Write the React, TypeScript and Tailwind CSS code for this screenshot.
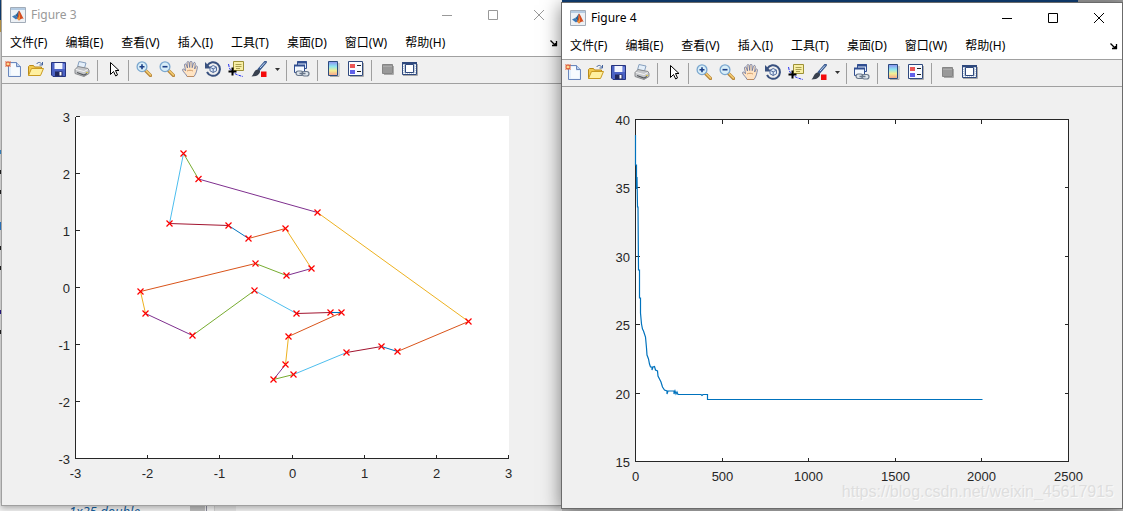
import { ReactNode } from 'react';

const BLUE = '#0072bd';
const ORANGE = '#d95319';
const YELLOW = '#edb120';
const PURPLE = '#7e2f8e';
const GREEN = '#77ac30';
const CYAN = '#4dbeee';
const MAROON = '#a2142f';

// tour stops in plot pixels, each with the colour of the leg that leaves it
const tour: [number, number, string][] = [
  [181.5, 69.5, GREEN],
  [196.5, 95, PURPLE],
  [315.5, 128.5, YELLOW],
  [466.5, 237.5, ORANGE],
  [395.5, 267.5, BLUE],
  [379.5, 262.5, MAROON],
  [344.5, 268.5, CYAN],
  [291.5, 290.5, GREEN],
  [271.5, 295.5, PURPLE],
  [283.5, 280.5, YELLOW],
  [286.5, 252.5, ORANGE],
  [339.5, 228.5, BLUE],
  [328.5, 228.5, MAROON],
  [294.5, 229.5, CYAN],
  [252.5, 206.5, GREEN],
  [190.5, 251.5, PURPLE],
  [143.5, 229.5, YELLOW],
  [138.5, 207.5, ORANGE],
  [253.5, 179.5, GREEN],
  [284.5, 191.5, PURPLE],
  [309.5, 184.5, YELLOW],
  [283.5, 144.5, ORANGE],
  [246.5, 154.5, BLUE],
  [226.5, 141.5, MAROON],
  [167.5, 139.5, CYAN],
];

const costCurve =
  '73.5,48 73.5,78 74.5,78 74.5,102 75,90 75.5,120 76,120 76.5,183 77.5,183 77.5,211 78.5,211 78.5,226 79.5,237 80.5,242 81.5,244 83.5,250 84.5,261 85,268 86.5,272 87.5,277 88.5,280 90,280 90,283 91,280 92.5,279.5 93.5,283 95.5,284 96,289 97.5,292 99,295 100.5,300 102.5,303 105,304 105,307 106,304 112,304 112,307 113,304 114,307 115,305 116,307.5 139,307.5 140,308.5 141,307.5 145.5,307.5 145.5,312.5 420.5,312.5';

const menus = ['文件(F)', '编辑(E)', '查看(V)', '插入(I)', '工具(T)', '桌面(D)', '窗口(W)', '帮助(H)'];

function Icon({ children }: { children: ReactNode }) {
  return <svg className="block h-4 w-4" viewBox="0 0 16 16" fill="none" aria-hidden="true">{children}</svg>;
}

function Magnifier({ plus }: { plus?: boolean }) {
  return (
    <Icon>
      <path d="M9.5 9.5l5 5" stroke="#b8863a" strokeWidth="3.2" strokeLinecap="round" />
      <path d="M10 9.5l4.5 4.5" stroke="#f6cf72" strokeWidth="1.5" strokeLinecap="round" />
      <circle cx="6" cy="5.7" r="4.9" fill="#d8eef8" stroke="#7ba7cf" strokeWidth="1.3" />
      <path d={plus ? 'M3.5 5.7h5M6 3.2v5' : 'M3.5 5.7h5'} stroke="#1c3f87" strokeWidth="1.6" />
    </Icon>
  );
}

const icons: Record<string, ReactNode> = {
  'New figure': (
    <Icon>
      <path d="M3.500 1.500h8l4 4v10h-12z" fill="#e4f0fc" stroke="#6a87bd" />
      <path d="M6 3h5v4h3.5v7.5H6z" fill="#fff" opacity=".7" />
      <path d="M11.5 1.5v4h4" fill="#b9cfec" stroke="#6a87bd" />
      <path d="M.5.5l5 5M5.5.5l-5 5M3 0v6M0 3h6" stroke="#e0623a" strokeWidth="1.2" />
      <circle cx="3" cy="3" r="1.3" fill="#ffd98a" />
    </Icon>
  ),
  Open: (
    <Icon>
      <path d="M.5 14.5v-9l1-1h4l1 1.500h7v2" fill="#f2c94e" stroke="#b98a1a" />
      <path d="M.5 14.5l3-7h12l-3 7z" fill="#fff0a0" stroke="#c99a22" />
      <path d="M8.5 3c2-2.300 4-2 5.500.5M14.5 1v3h-3" stroke="#42629c" />
    </Icon>
  ),
  Save: (
    <Icon>
      <path d="M.5 1.5h14v14H2L.5 14z" fill="#4c63c5" stroke="#27357f" />
      <path d="M3.5 2h8v6h-8z" fill="#f4f7ff" />
      <path d="M4 10.5h7.5V15H4z" fill="#22285d" />
      <path d="M8.5 11h2v3.5h-2z" fill="#fff" />
      <path d="M13 3v5" stroke="#8ea0ef" />
    </Icon>
  ),
  Print: (
    <Icon>
      <path d="M5 .5l7 1.5-1.5 5-7-1z" fill="#e4effa" stroke="#869fbd" />
      <path d="M1 8.5l3-3 10 2 1 2v3l-5 3-9-3z" fill="#c5c7ca" stroke="#898b8e" />
      <path d="M2 8.5l8 2 4-2" stroke="#f5f5f5" />
      <path d="M3 11.5l7 2.500 3-1.500" stroke="#55585c" strokeWidth="1.2" />
      <path d="M12 11.5h2" stroke="#d6c347" />
    </Icon>
  ),
  'Edit plot': (
    <Icon>
      <path d="M5.5 1.5v12l3-3 2.200 4.500 1.800-1-2-4.500H14z" fill="#fff" stroke="#000" />
    </Icon>
  ),
  'Zoom in': <Magnifier plus />,
  'Zoom out': <Magnifier />,
  Pan: (
    <Icon>
      <path
        d="M5 15.5c-.5-2-3.500-4-4.500-6.500 0-1.500 1.500-1.300 3 .7L2.500 4c0-1.500 1.700-1.500 2 0l1 3-.5-5.500c.2-1.300 1.800-1.300 2 0L7.700 6.500 8 1c.3-1.200 1.800-1 2 0l.2 5.700L11.500 2c.5-1 1.900-.6 1.800.5L12.700 8l1-2.500c.7-1 1.900-.4 1.700.7-.6 3-1 6.300-3.400 9.300z"
        fill="#ffe3c2"
        stroke="#64719a"
        strokeWidth=".8"
      />
      <path d="M5 15.5h7M5 10c2-1 4-1 6 0" stroke="#c88d55" strokeWidth=".8" />
    </Icon>
  ),
  'Rotate 3D': (
    <Icon>
      <path d="M2.3 4.5A6.800 6.800 0 1 1 2 11" stroke="#39517f" strokeWidth="2" />
      <path d="M0 1v6.5h6.500z" fill="#39517f" />
      <path d="M8.2 4.5l3.300 1.700v3.600l-3.300 1.700-3.200-1.700V6.200z" fill="#e1edfb" stroke="#536c9c" />
      <path d="M5 6.2l3.200 1.700 3.300-1.700M8.200 7.900v3.600" stroke="#536c9c" />
    </Icon>
  ),
  'Data cursor': (
    <Icon>
      <path d="M.5 3c.5 3 1 5 3 7s5 4 11.500 5.500" stroke="#2430ee" strokeDasharray="3 1" />
      <path d="M5.5.5h10v9h-10z" fill="#f8efa5" stroke="#9c9036" />
      <path d="M7.500 3.5h6M7.500 5.500h6M8 7.500h4" stroke="#aaa050" />
      <path d="M4.500 6.500v8M.5 10.500h8" stroke="#000" strokeWidth="2" />
    </Icon>
  ),
  Brush: (
    <Icon>
      <path d="M14.5 1L8 8.500" stroke="#39598f" strokeWidth="2.800" strokeLinecap="round" />
      <path d="M14 1.5L9 7" stroke="#c5dcf4" />
      <path d="M.5 15.5c2-1.500 2-5 4.500-6.500 1.500-1 3.500-.5 4 1s-1.500 4-4 5z" fill="#39414f" />
      <path d="M10 10.5h5.500V16H10z" fill="#f30b0b" />
    </Icon>
  ),
  'Link plot': (
    <Icon>
      <path d="M3.500.5h9v7h-9z" fill="#dce8fa" stroke="#304e91" />
      <path d="M3 1.500h10" stroke="#304e91" strokeWidth="2" />
      <path d="M.5 4.500h10v7H.5z" fill="#f4f9ff" stroke="#304e91" />
      <path d="M0 4.500h11" stroke="#304e91" strokeWidth="2" />
      <rect x="2" y="10" width="7" height="4.500" rx="2.200" fill="#dde5ec" stroke="#69778a" strokeWidth="1.200" />
      <rect x="8" y="10.500" width="7" height="4.500" rx="2.200" fill="#dde5ec" stroke="#69778a" strokeWidth="1.200" />
      <path d="M5.500 12.500h6" stroke="#69778a" strokeWidth="1.500" />
    </Icon>
  ),
  Colorbar: (
    <Icon>
      <defs>
        <linearGradient id="jet" x1="0" y1="0" x2="0" y2="1">
          <stop offset="0" stopColor="#8c8cf0" />
          <stop offset=".35" stopColor="#8fe6f0" />
          <stop offset=".65" stopColor="#f3ee93" />
          <stop offset="1" stopColor="#f5a08c" />
        </linearGradient>
      </defs>
      <path d="M5 15.500h9V2" stroke="#aaa" />
      <path d="M3.500.5h9v14h-9z" fill="url(#jet)" stroke="#2b4c7e" />
    </Icon>
  ),
  Legend: (
    <Icon>
      <path d="M2 15.500h13.500V2" stroke="#aaa" />
      <path d="M.5.5h14v14H.5z" fill="#f8fbff" stroke="#304a7e" />
      <path d="M2 3h5v4H2z" fill="#ea5656" />
      <path d="M2 9h5v4H2z" fill="#6060e8" />
      <path d="M9 4.500h4M9 10.500h4" stroke="#222" />
    </Icon>
  ),
  'Hide tools': (
    <Icon>
      <path d="M5 13.500h9.500V5" stroke="#aaa" />
      <path d="M3.500 3.500h10v9h-10z" fill="#999" stroke="#858585" />
      <path d="M4 5.500h9" stroke="#aaa" />
    </Icon>
  ),
  'Show tools': (
    <Icon>
      <path d="M1 14.500h14.500V3" stroke="#aaa" />
      <path d="M.5 1.500h14v12H.5z" fill="#c2cfdf" stroke="#304a7e" />
      <path d="M0 2h15" stroke="#304a7e" strokeWidth="2" />
      <path d="M1.500 4v8.500M13.500 4v8.500M2 12.500h11" stroke="#fff" strokeDasharray="1 1" />
      <path d="M3.500 3.500h8v8h-8z" fill="#fff" stroke="#304a7e" />
    </Icon>
  ),
};

function Logo() {
  return (
    <svg className="h-4 w-4" viewBox="0 0 16 16" aria-hidden="true">
      <path d="M.5.5h15v15H.5z" fill="#edf1f5" stroke="#a2acb8" />
      <path d="M1 1h14v2H1z" fill="#b4cbe2" />
      <path d="M2 9.5l3-1.500 3 3-2 1.500z" fill="#3b78b6" />
      <path d="M5 8c2-.5 2.700-3.500 4-4.500L8 11z" fill="#286293" />
      <path d="M9 3.5c1.500 1 3 6 5 8.500-2-1-3 0-5 1.500l-2-2c1.300-2 1.300-6 2-8z" fill="#d44c20" />
      <path d="M9 3.5c1 2 .8 6-1.500 8.500l1.500 1.500c1.500-1 1.500-5 0-10z" fill="#f19b3b" />
    </svg>
  );
}

function Separator() {
  return <div className="mr-1 ml-[3px] h-[21px] w-px bg-[#a0a0a0]" />;
}

function ToolGroup({ names }: { names: string[] }) {
  return (
    <>
      {names.map(n => (
        <button key={n} type="button" aria-label={n} className="w-[23px] pt-px pl-[3px]">{icons[n]}</button>
      ))}
    </>
  );
}

function FigureWindow({ title, active, className, children }: { title: string; active?: boolean; className: string; children: ReactNode }) {
  return (
    <section className={`min-w-0 bg-[#f0f0f0] ${className}`}>
      <header className={`flex h-[29px] items-center bg-white pl-2 ${active ? 'text-black' : 'text-[#999999]'}`}>
        <Logo />
        <h2 className="ml-[5px] flex-1 text-[12px] leading-4">{title}</h2>
        <button type="button" aria-label="Minimize" className="flex w-[46px] justify-center">
          <svg className="h-2.5 w-2.5" viewBox="0 0 10 10"><path d="M0 5.500h10" stroke="currentColor" /></svg>
        </button>
        <button type="button" aria-label="Maximize" className="flex w-[46px] justify-center">
          <svg className="h-2.5 w-2.5" viewBox="0 0 10 10"><path d="M.5.5h9v9h-9z" fill="none" stroke="currentColor" /></svg>
        </button>
        <button type="button" aria-label="Close" className="flex w-[46px] justify-center">
          <svg className="h-2.5 w-2.5" viewBox="0 0 10 10"><path d="M0 0l10 10M10 0L0 10" stroke="currentColor" /></svg>
        </button>
      </header>
      <nav className="flex h-[27px] items-center gap-[18px] bg-white pr-1 pl-2 text-[12px] leading-4 whitespace-nowrap text-black">
        {menus.map(m => <button key={m} type="button">{m}</button>)}
        <button type="button" aria-label="Dock figure" className="ml-auto">
          <svg className="h-2 w-2" viewBox="0 0 8 8"><path d="M.5 1.500l4 4M2 6.500h5M6.500 2v5M4 5.500h3M5.500 4v3" fill="none" stroke="#000" strokeWidth="1.300" /></svg>
        </button>
      </nav>
      <div className="flex h-7 items-start border-y border-[#a0a0a0] pt-[3px]">
        <ToolGroup names={['New figure', 'Open', 'Save', 'Print']} />
        <Separator />
        <ToolGroup names={['Edit plot']} />
        <Separator />
        <ToolGroup names={['Zoom in', 'Zoom out', 'Pan', 'Rotate 3D', 'Data cursor', 'Brush']} />
        <button type="button" aria-label="Brush options" className="flex h-[18px] w-3 items-center justify-center">
          <svg className="h-[3px] w-[5px]" viewBox="0 0 5 3"><path d="M0 0h5L2.500 3z" fill="#333" /></svg>
        </button>
        <Separator />
        <ToolGroup names={['Link plot']} />
        <Separator />
        <ToolGroup names={['Colorbar', 'Legend']} />
        <Separator />
        <ToolGroup names={['Hide tools', 'Show tools']} />
      </div>
      {children}
    </section>
  );
}

const LEFT = 73.5;
const RIGHT = 506.5;
const TOP = 32.5;
const BOTTOM = 374.5;

function Plot({ label, xs, ys, boxed, children }: { label: string; xs: number[]; ys: number[]; boxed?: boolean; children: ReactNode }) {
  const px = (i: number) => Math.floor(LEFT + (i * (RIGHT - LEFT)) / (xs.length - 1)) + 0.5;
  const py = (i: number) => Math.floor(BOTTOM - (i * (BOTTOM - TOP)) / (ys.length - 1)) + 0.5;
  return (
    <svg className="block h-auto w-full" viewBox="0 0 560 421" role="img" aria-label={label}>
      <path d={`M${LEFT} ${TOP - 0.5}H${RIGHT + 0.5}V${BOTTOM}H${LEFT}z`} fill="#fff" />
      <g stroke="#262626" fill="none" shapeRendering="crispEdges">
        <path d={boxed ? `M${LEFT} ${TOP}H${RIGHT}V${BOTTOM}H${LEFT}z` : `M${LEFT} ${TOP}V${BOTTOM}H${RIGHT}`} />
        {xs.map((x, i) => <path key={x} d={`M${px(i)} ${BOTTOM}v-4${boxed ? `M${px(i)} ${TOP}v4` : ''}`} />)}
        {ys.map((y, i) => <path key={y} d={`M${LEFT} ${py(i)}h4${boxed ? `M${RIGHT} ${py(i)}h-4` : ''}`} />)}
      </g>
      <g fill="#262626" className="font-['Liberation_Sans',sans-serif] text-[13px]">
        {xs.map((x, i) => <text key={x} x={px(i)} y="394" textAnchor="middle">{x}</text>)}
        {ys.map((y, i) => <text key={y} x="68" y={py(i) + 5} textAnchor="end">{y}</text>)}
      </g>
      {children}
    </svg>
  );
}

export default function App() {
  return (
    <main className="relative h-screen overflow-hidden bg-[#e6e6e6] font-['Noto_Sans','Noto_Sans_CJK_SC',sans-serif]">
      {/* the desktop that shows round the two windows */}
      <div className="absolute inset-x-0 top-0 flex h-[3px]">
        <div className="flex-1 bg-[#10417a]" />
        <div className="w-[45px] bg-[#a0a0a0]" />
      </div>
      <div className="absolute top-0 left-0 w-px">
        <div className="h-5 bg-[#10417a]" />
        <div className="h-3 bg-[#c9a24a]" />
        <div className="mt-[118px] h-1 bg-[#3b8fd0]" />
        <div className="mt-4 h-1 bg-[#222222]" />
        <div className="mt-4 h-1 bg-[#222222]" />
        <div className="mt-7 h-2 bg-[#2f7fd0]" />
        <div className="mt-4 h-1 bg-[#222222]" />
        <div className="mt-4 h-1 bg-[#222222]" />
        <div className="mt-10 h-1 bg-[#2a1a8a]" />
        <div className="mt-4 h-1 bg-[#222222]" />
      </div>
      <div className="absolute bottom-0 left-0 flex h-2 w-1/2 bg-[#f1f1f1]">
        <span className="ml-[69px] w-[121px] text-[13px] leading-4 text-[#15609e] italic">1x25 double</span>
        <span className="w-[15px] bg-[#bdbdbd]" />
        <span className="ml-px w-px bg-[#8a8a9a]" />
        <span className="ml-[7px] w-px bg-[#d0d0d0]" />
        <span className="w-[21px] bg-[#e4e4e4]" />
      </div>
      <div className="absolute right-0 bottom-0 h-2 w-1/2 bg-[#c8c8c8]" />

      <div className="relative grid grid-cols-2 items-start pl-px">
        <FigureWindow title="Figure 3" className="border-b border-l border-[#a0a0a0] shadow-[0_2px_6px_rgba(0,0,0,0.3)]">
          <Plot label="Shortest tour" xs={[-3, -2, -1, 0, 1, 2, 3]} ys={[-3, -2, -1, 0, 1, 2, 3]}>
            {tour.map(([x, y, color], i) => {
              const [nx, ny] = tour[(i + 1) % tour.length];
              return <line key={i} x1={x} y1={y} x2={nx} y2={ny} stroke={color} />;
            })}
            {tour.map(([x, y], i) => (
              <path key={i} d={`M${x - 3} ${y - 3}l6 6M${x + 3} ${y - 3}l-6 6`} stroke="#ff0000" strokeWidth="1.2" />
            ))}
          </Plot>
        </FigureWindow>

        <FigureWindow title="Figure 4" active className="relative z-10 mt-0.5 -ml-px border border-[#6b6b6b] shadow-[0_3px_18px_rgba(0,0,0,0.5)]">
          <Plot label="Cost by iteration" xs={[0, 500, 1000, 1500, 2000, 2500]} ys={[15, 20, 25, 30, 35, 40]} boxed>
            <polyline points={costCurve} fill="none" stroke={BLUE} strokeWidth="1.2" />
          </Plot>
          <p className="absolute right-2 bottom-1 font-['Liberation_Sans',sans-serif] text-[16px] leading-6 text-[#dedede] [text-shadow:1px_1px_0_#fafafa]">
            https://blog.csdn.net/weixin_45617915
          </p>
        </FigureWindow>
      </div>
    </main>
  );
}
